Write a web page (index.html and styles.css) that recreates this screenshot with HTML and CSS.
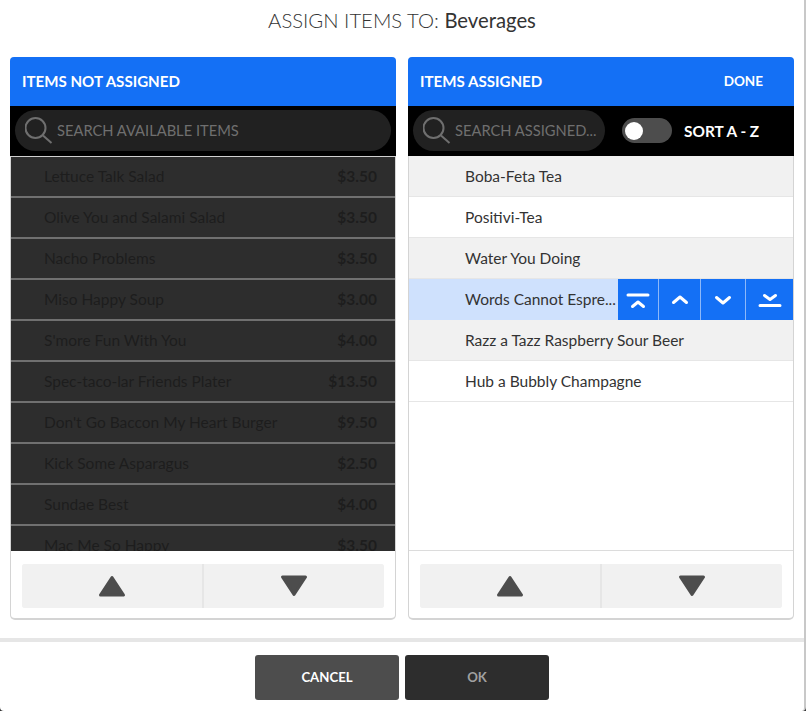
FILE: index.html
```
<!DOCTYPE html>
<html lang="en">
<head>
<meta charset="utf-8">
<title>Assign items</title>
<link rel="stylesheet" href="styles.css">
</head>
<body>
<div class="dialog">
  <h1 class="title">ASSIGN ITEMS TO: <span class="title-name">Beverages</span></h1>
  <div class="panels">
    <section class="panel">
      <header class="panel-head"><span>ITEMS NOT ASSIGNED</span></header>
      <div class="toolbar">
        <div class="search search-wide">
          <svg class="search-icon" viewBox="0 0 28 28"><circle cx="10.5" cy="11" r="10"/><path d="M18 18.500l8.500 7.500"/></svg>
          <span>SEARCH AVAILABLE ITEMS</span>
        </div>
      </div>
      <div class="list list-disabled">
        <div class="row"><span class="name">Lettuce Talk Salad</span><span class="price">$3.50</span></div>
        <div class="row"><span class="name">Olive You and Salami Salad</span><span class="price">$3.50</span></div>
        <div class="row"><span class="name">Nacho Problems</span><span class="price">$3.50</span></div>
        <div class="row"><span class="name">Miso Happy Soup</span><span class="price">$3.00</span></div>
        <div class="row"><span class="name">S'more Fun With You</span><span class="price">$4.00</span></div>
        <div class="row"><span class="name">Spec-taco-lar Friends Plater</span><span class="price">$13.50</span></div>
        <div class="row"><span class="name">Don't Go Baccon My Heart Burger</span><span class="price">$9.50</span></div>
        <div class="row"><span class="name">Kick Some Asparagus</span><span class="price">$2.50</span></div>
        <div class="row"><span class="name">Sundae Best</span><span class="price">$4.00</span></div>
        <div class="row"><span class="name">Mac Me So Happy</span><span class="price">$3.50</span></div>
      </div>
      <div class="pager">
        <button class="page-btn"><svg class="tri" viewBox="0 0 28 22"><path d="M14 2.500L25.500 20H2.500z"/></svg></button>
        <button class="page-btn"><svg class="tri" viewBox="0 0 28 22"><path d="M2.500 2H25.500L14 19.500z"/></svg></button>
      </div>
    </section>
    <section class="panel">
      <header class="panel-head"><span>ITEMS ASSIGNED</span><span class="done">DONE</span></header>
      <div class="toolbar">
        <div class="search search-narrow">
          <svg class="search-icon" viewBox="0 0 28 28"><circle cx="10.5" cy="11" r="10"/><path d="M18 18.500l8.500 7.500"/></svg>
          <span>SEARCH ASSIGNED...</span>
        </div>
        <div class="toggle"><span class="knob"></span></div>
        <span class="sort-label">SORT A - Z</span>
      </div>
      <div class="list list-assigned">
        <div class="row"><span class="name">Boba-Feta Tea</span></div>
        <div class="row"><span class="name">Positivi-Tea</span></div>
        <div class="row"><span class="name">Water You Doing</span></div>
        <div class="row row-selected">
          <span class="name">Words Cannot Espre...</span>
          <div class="actions">
            <button class="act act-1"><svg viewBox="0 0 22 16"><path d="M1 3H21M5.500 14.500L11 10l5.500 4.500"/></svg></button>
            <button class="act act-2"><svg viewBox="0 0 22 16"><path d="M4.500 10.500L11 5l6.500 5.500"/></svg></button>
            <button class="act act-3"><svg viewBox="0 0 22 16"><path d="M4.500 5.500L11 11l6.500-5.500"/></svg></button>
            <button class="act act-4"><svg viewBox="0 0 22 16"><path d="M5.500 3.500L11 7.500l5.500-4M1 13.500H21"/></svg></button>
          </div>
        </div>
        <div class="row"><span class="name">Razz a Tazz Raspberry Sour Beer</span></div>
        <div class="row"><span class="name">Hub a Bubbly Champagne</span></div>
      </div>
      <div class="pager">
        <button class="page-btn"><svg class="tri" viewBox="0 0 28 22"><path d="M14 2.500L25.500 20H2.500z"/></svg></button>
        <button class="page-btn"><svg class="tri" viewBox="0 0 28 22"><path d="M2.500 2H25.500L14 19.500z"/></svg></button>
      </div>
    </section>
  </div>
  <footer class="footer">
    <button class="foot-btn foot-cancel">CANCEL</button>
    <button class="foot-btn foot-ok">OK</button>
  </footer>
</div>
</body>
</html>
```
FILE: styles.css
```
* { box-sizing: border-box; }
html, body { margin: 0; padding: 0; background: #333; }
body { font-family: Lato, "Open Sans", sans-serif; color: #333; }
button { font-family: inherit; border: 0; padding: 0; }

.dialog {
  width: 806px;
  height: 711px;
  background: #fff;
  border-right: 2px solid #c8c8c8;
  border-radius: 0 0 4px 4px;
  display: flex;
  flex-direction: column;
  overflow: hidden;
}
.title {
  margin: 0;
  height: 57px;
  padding-top: 7px;
  text-align: center;
  font-size: 20.3px;
  line-height: 26px;
  font-weight: 300;
  color: #333;
}
.title-name { font-weight: 400; }

.panels {
  display: flex;
  gap: 12px;
  padding: 0 10px;
  height: 585px;
  flex: none;
  border-bottom: 4px solid #e6e6e6;
}
.panel {
  width: 386px;
  height: 563px;
  border-radius: 5px;
  border: 1px solid #d4d4d4;
  border-top: 0;
  border-bottom-width: 2px;
  display: flex;
  flex-direction: column;
  background: #fff;
}
.panel-head {
  margin: 0 -1px;
  height: 49px;
  flex: none;
  background: #1470f5;
  border-radius: 4px 4px 0 0;
  color: #fff;
  font-size: 15.1px;
  font-weight: 700;
  display: flex;
  align-items: center;
  justify-content: space-between;
  padding: 0 31px 2px 12px;
}
.done { font-size: 13.5px; }
.toolbar {
  margin: 0 -1px;
  height: 50px;
  flex: none;
  background: #000;
  display: flex;
  align-items: center;
  padding: 0 5px 1px;
}
.search {
  height: 41px;
  border-radius: 21px;
  background: #212121;
  display: flex;
  align-items: center;
  padding: 0 0 2px 10px;
  gap: 4px;
  color: #6f6f6f;
  font-size: 14.7px;
  white-space: nowrap;
}
.search-wide { width: 376px; }
.search-narrow { width: 192px; flex: none; }
.search-icon {
  width: 28px;
  height: 28px;
  fill: none;
  stroke: #6f6f6f;
  stroke-width: 2;
  flex: none;
  margin-top: 2px;
}
.toggle {
  width: 50px;
  height: 25px;
  margin-left: 17px;
  border-radius: 13px;
  background: #4d4d4d;
  display: flex;
  align-items: center;
  padding-left: 3px;
  flex: none;
}
.knob { width: 18px; height: 18px; border-radius: 50%; background: #fff; }
.sort-label {
  margin-left: 12px;
  color: #fff;
  font-size: 15.4px;
  font-weight: 700;
  white-space: nowrap;
}

.list { height: 395px; flex: none; overflow: hidden; }
.list-disabled { background: #2d2d2d; color: #1d1d1d; }
.row {
  height: 41px;
  display: flex;
  align-items: center;
  justify-content: space-between;
  padding: 0 18px 2px 33px;
  font-size: 15.5px;
  white-space: nowrap;
}
.list-disabled .row { border-bottom: 2px solid #707070; padding-bottom: 2px; }
.list-disabled .row:first-child { height: 42px; border-top: 1px solid #d0d0d0; }
.price { font-weight: 700; }
.list-assigned { border-bottom: 1px solid #dcdcdc; }
.list-assigned .row { padding-left: 56px; padding-bottom: 1px; border-bottom: 1px solid #e6e6e6; background: #fff; }
.list-assigned .row:nth-child(odd) { background: #f1f1f1; }
.list-assigned .row-selected { background: #cfe1fd; padding-right: 0; padding-bottom: 0; border-bottom: 0; }
.list-assigned .row-selected .name { padding-bottom: 1px; }
.actions { display: flex; height: 41px; }
.act {
  background: #1470f5;
  border-left: 1px solid #8db8f9;
  display: flex;
  align-items: center;
  justify-content: center;
}
.act svg { width: 22px; height: 16px; fill: none; stroke: #fff; stroke-width: 3; stroke-linecap: round; stroke-linejoin: round; overflow: visible; }
.act-1 { width: 40px; border-left: 0; }
.act-2 { width: 42px; }
.act-3 { width: 45px; }
.act-4 { width: 48px; }

.pager {
  display: flex;
  margin: 13px 11px 0;
  height: 44px;
  border-radius: 3px;
  background: #f1f1f1;
  overflow: hidden;
}
.page-btn {
  flex: 1;
  background: #f1f1f1;
  display: flex;
  align-items: center;
  justify-content: center;
}
.page-btn + .page-btn { border-left: 2px solid #e6e6e6; }
.tri { width: 28px; height: 22px; fill: #4d4d4d; stroke: #4d4d4d; stroke-width: 3; stroke-linejoin: round; }

.footer {
  flex: 1;
  display: flex;
  justify-content: center;
  gap: 6px;
  padding-top: 13px;
}
.foot-btn {
  width: 144px;
  height: 45px;
  border-radius: 3px;
  font-size: 13.2px;
  font-weight: 700;
  padding-bottom: 2px;
}
.foot-cancel { background: #4d4d4d; color: #fff; }
.foot-ok { background: #2d2d2d; color: #a0a0a0; }
```
